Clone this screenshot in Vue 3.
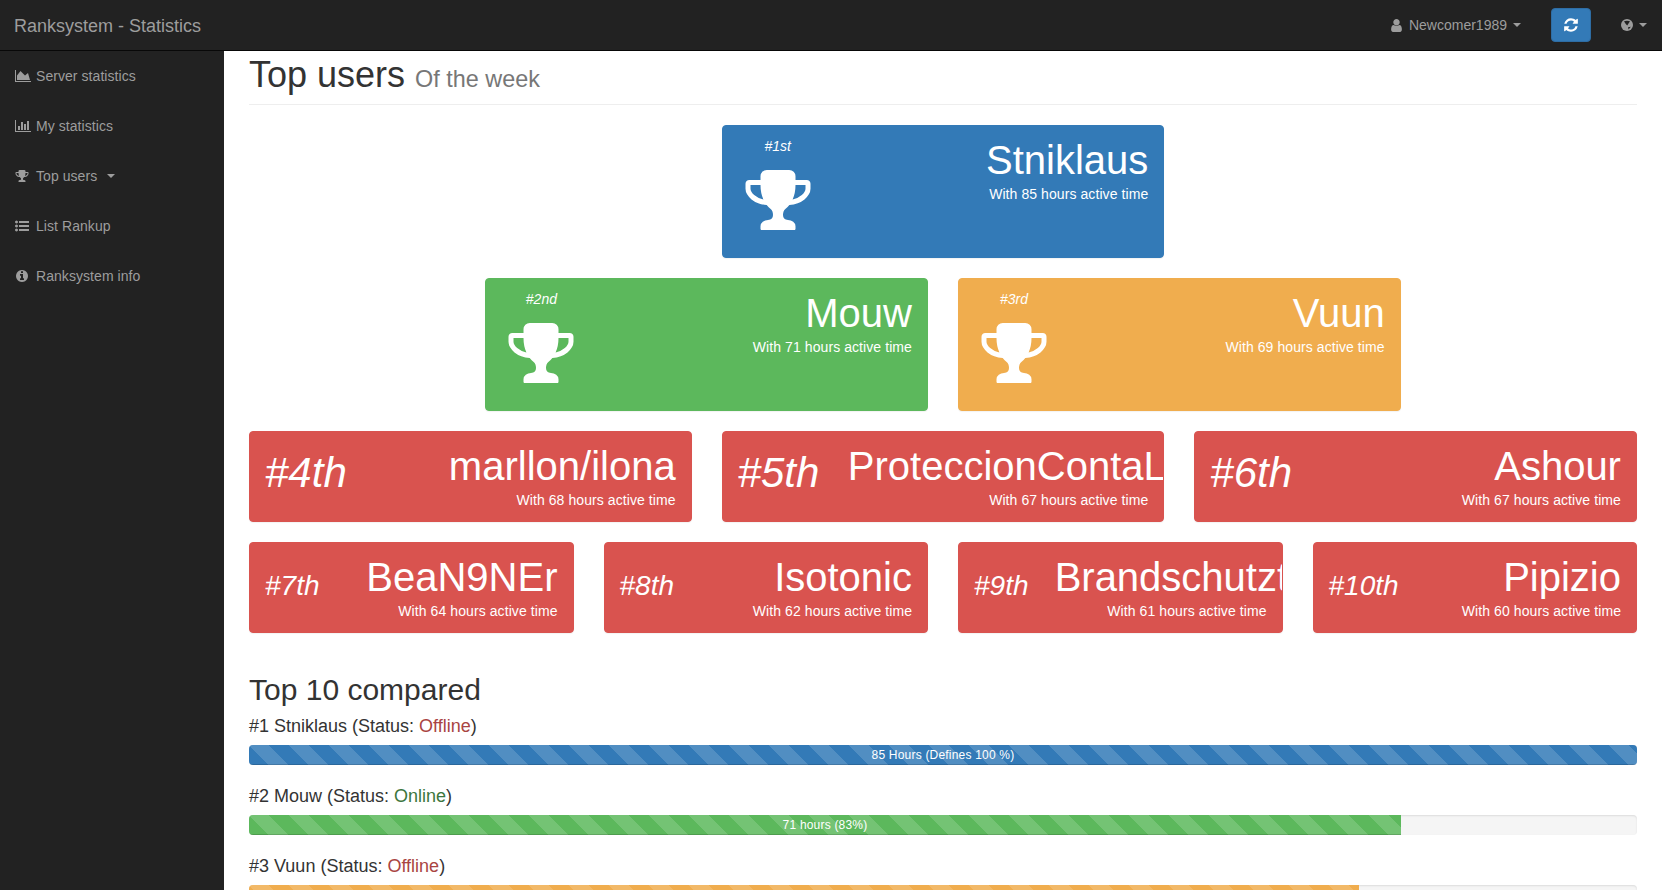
<script setup>
const icons = {
  area: 'M2048 1536v128h-2048v-1536h128v1408h1920zm-384-1024l256 896h-1664v-576l448-576 576 576z',
  bar: 'M640 896v512h-256v-512h256zm384-512v1024h-256v-1024h256zm1024 1152v128h-2048v-1536h128v1408h1920zm-640-896v768h-256v-768h256zm384-384v1152h-256v-1152h256z',
  trophy: 'M522 883q-74-162-74-371h-256v96q0 78 94.5 162t235.5 113zm1078-275v-96h-256q0 209-74 371 141-29 235.5-113t94.5-162zm128-128v128q0 71-41.5 143t-112 130-173 97.5-215.5 44.5q-42 54-95 95-38 34-52.5 72.5t-14.5 89.5q0 54 30.5 91t97.5 37q75 0 133.5 45.5t58.5 114.5v64q0 14-9 23t-23 9h-832q-14 0-23-9t-9-23v-64q0-69 58.5-114.5t133.5-45.5q67 0 97.5-37t30.5-91q0-51-14.5-89.5t-52.5-72.5q-53-41-95-95-113-5-215.5-44.5t-173-97.5-112-130-41.5-143v-128q0-40 28-68t68-28h288v-96q0-66 47-113t113-47h576q66 0 113 47t47 113v96h288q40 0 68 28t28 68z',
  list: 'M384 1408q0 80-56 136t-136 56-136-56-56-136 56-136 136-56 136 56 56 136zm0-512q0 80-56 136t-136 56-136-56-56-136 56-136 136-56 136 56 56 136zm1408 416v192q0 13-9.5 22.5t-22.5 9.5h-1216q-13 0-22.5-9.5t-9.5-22.5v-192q0-13 9.5-22.5t22.5-9.5h1216q13 0 22.5 9.5t9.5 22.5zm-1408-928q0 80-56 136t-136 56-136-56-56-136 56-136 136-56 136 56 56 136zm1408 416v192q0 13-9.5 22.5t-22.5 9.5h-1216q-13 0-22.5-9.5t-9.5-22.5v-192q0-13 9.5-22.5t22.5-9.5h1216q13 0 22.5 9.5t9.5 22.5zm0-512v192q0 13-9.5 22.5t-22.5 9.5h-1216q-13 0-22.5-9.5t-9.5-22.5v-192q0-13 9.5-22.5t22.5-9.5h1216q13 0 22.5 9.5t9.5 22.5z',
  info: 'M1152 1376v-160q0-14-9-23t-23-9h-96v-512q0-14-9-23t-23-9h-320q-14 0-23 9t-9 23v160q0 14 9 23t23 9h96v320h-96q-14 0-23 9t-9 23v160q0 14 9 23t23 9h448q14 0 23-9t9-23zm-128-896v-160q0-14-9-23t-23-9h-192q-14 0-23 9t-9 23v160q0 14 9 23t23 9h192q14 0 23-9t9-23zm640 416q0 209-103 385.5t-279.5 279.5-385.5 103-385.5-103-279.5-279.5-103-385.5 103-385.5 279.5-279.5 385.5-103 385.5 103 279.5 279.5 103 385.5z',
  user: 'M1536 1399q0 109-62.5 187t-150.5 78h-854q-88 0-150.5-78t-62.5-187q0-85 8.5-160.5t31.5-152 58.5-131 94-89 134.5-34.5q131 128 313 128t313-128q76 0 134.5 34.5t94 89 58.5 131 31.5 152 8.5 160.5zm-256-887q0 159-112.5 271.5t-271.5 112.5-271.5-112.5-112.5-271.5 112.5-271.5 271.5-112.5 271.5 112.5 112.5 271.5z',
  refresh: 'M1639 1056q0 5-1 7-64 268-268 434.5t-478 166.5q-146 0-282.5-55t-243.5-157l-129 129q-19 19-45 19t-45-19-19-45v-448q0-26 19-45t45-19h448q26 0 45 19t19 45-19 45l-137 137q71 66 161 102t187 36q134 0 250-65t186-179q11-17 53-117 8-23 30-23h192q13 0 22.5 9.5t9.5 22.5zm25-800v448q0 26-19 45t-45 19h-448q-26 0-45-19t-19-45 19-45l138-138q-148-137-349-137-134 0-250 65t-186 179q-11 17-53 117-8 23-30 23h-199q-13 0-22.5-9.5t-9.5-22.5v-7q65-268 270-434.5t480-166.5q146 0 284 55.5t245 156.5l130-129q19-19 45-19t45 19 19 45z'
}

const nav = [
  { label: 'Server statistics', icon: 'area', wide: true },
  { label: 'My statistics', icon: 'bar', wide: true },
  { label: 'Top users', icon: 'trophy', caret: true },
  { label: 'List Rankup', icon: 'list' },
  { label: 'Ranksystem info', icon: 'info' }
]

const first = [{ rank: '#1st', name: 'Stniklaus', hours: 85, color: 'blue', cls: 'col4 offset4' }]
const second = [
  { rank: '#2nd', name: 'Mouw', hours: 71, color: 'green', cls: 'col4 offset2' },
  { rank: '#3rd', name: 'Vuun', hours: 69, color: 'orange', cls: 'col4' }
]
const middle = [
  { rank: '#4th', name: 'marllon/ilona', hours: 68 },
  { rank: '#5th', name: 'ProteccionContaLegal', hours: 67 },
  { rank: '#6th', name: 'Ashour', hours: 67 }
]
const lower = [
  { rank: '#7th', name: 'BeaN9NEr', hours: 64 },
  { rank: '#8th', name: 'Isotonic', hours: 62 },
  { rank: '#9th', name: 'Brandschutztechnik', hours: 61 },
  { rank: '#10th', name: 'Pipizio', hours: 60 }
]
const bars = [
  { pos: '#1 Stniklaus', status: 'Offline', width: 100, color: 'blue', text: '85 Hours (Defines 100 %)' },
  { pos: '#2 Mouw', status: 'Online', width: 83, color: 'green', text: '71 hours (83%)' },
  { pos: '#3 Vuun', status: 'Offline', width: 80, color: 'orange', text: '69 hours (80%)' }
]
</script>

<template>
  <div class="shell">
    <header class="topbar">
      <a class="brand">Ranksystem - Statistics</a>
      <div class="top-right">
        <span class="user-menu">
          <svg class="ic" width="15" height="15" viewBox="0 0 1792 1792"><path :d="icons.user" /></svg>
          <span>Newcomer1989</span>
          <i class="caret"></i>
        </span>
        <button class="refresh">
          <svg width="16" height="16" viewBox="0 0 1792 1792"><path :d="icons.refresh" fill="#fff" /></svg>
        </button>
        <span class="lang-menu">
          <svg class="ic" width="14" height="14" viewBox="0 0 14 14">
            <circle cx="7" cy="7" r="6" />
            <path class="land" d="M4 3.2 Q7 2.4 10 3.2 L7.2 7.4 5.4 5.6ZM8 9.2 10.8 8.8 8.6 11.6Z" />
          </svg>
          <i class="caret"></i>
        </span>
      </div>
    </header>

    <div class="body">
      <aside class="sidebar">
        <a v-for="item in nav" :key="item.label" class="nav-item">
          <span class="nav-icon">
            <svg class="ic" :width="item.wide ? 16 : 14" height="14" :viewBox="item.wide ? '0 0 2048 1792' : '0 0 1792 1792'"><path :d="icons[item.icon]" /></svg>
          </span>
          <span>{{ item.label }}</span>
          <i v-if="item.caret" class="caret nav-caret"></i>
        </a>
      </aside>

      <main class="content">
        <h1 class="page-title">Top users <small>Of the week</small></h1>

        <div v-for="(row, i) in [first, second]" :key="i" class="row">
          <div v-for="p in row" :key="p.rank" :class="p.cls">
            <div class="panel" :class="p.color">
              <div class="side">
                <div class="rank-top">{{ p.rank }}</div>
                <svg class="trophy" width="70" height="70" viewBox="0 0 1792 1792"><path :d="icons.trophy" fill="#fff" /></svg>
              </div>
              <div class="main">
                <div class="name">{{ p.name }}</div>
                <div class="sub">With {{ p.hours }} hours active time</div>
              </div>
            </div>
          </div>
        </div>

        <div class="row">
          <div v-for="p in middle" :key="p.rank" class="col4">
            <div class="panel red flat">
              <div class="side"><div class="rank-big">{{ p.rank }}</div></div>
              <div class="main">
                <div class="name">{{ p.name }}</div>
                <div class="sub">With {{ p.hours }} hours active time</div>
              </div>
            </div>
          </div>
        </div>

        <div class="row">
          <div v-for="p in lower" :key="p.rank" class="col3">
            <div class="panel red flat">
              <div class="side"><div class="rank-mid">{{ p.rank }}</div></div>
              <div class="main">
                <div class="name">{{ p.name }}</div>
                <div class="sub">With {{ p.hours }} hours active time</div>
              </div>
            </div>
          </div>
        </div>

        <h2 class="compare-title">Top 10 compared</h2>

        <div v-for="b in bars" :key="b.pos" class="bar-block">
          <div class="bar-label">
            {{ b.pos }} (Status: <span :class="b.status === 'Online' ? 'online' : 'offline'">{{ b.status }}</span>)
          </div>
          <div class="progress">
            <div class="progress-bar" :class="b.color" :style="{ width: b.width + '%' }">{{ b.text }}</div>
          </div>
        </div>
      </main>
    </div>
  </div>
</template>

<style>
html, body { margin: 0; overflow: hidden; background: #fff; }
</style>

<style scoped>
* { box-sizing: border-box; }
.shell {
  height: 100vh;
  display: flex;
  flex-direction: column;
  overflow: hidden;
  font-family: "Liberation Sans", Arial, sans-serif;
  font-size: 14px;
  line-height: 20px;
  color: #333;
}
.topbar {
  flex: 0 0 51px;
  display: flex;
  align-items: center;
  justify-content: space-between;
  background: #222;
  border-bottom: 1px solid #080808;
}
.brand { padding: 2px 0 0 14px; font-size: 18px; color: #9d9d9d; }
.top-right { display: flex; align-items: center; padding-right: 15px; color: #9d9d9d; }
.ic { fill: #9d9d9d; display: block; }
.land { fill: #222; }
.user-menu { display: flex; align-items: center; }
.user-menu span { margin-left: 5px; }
.caret {
  display: inline-block;
  width: 0;
  height: 0;
  border-top: 4px solid #9d9d9d;
  border-left: 4px solid transparent;
  border-right: 4px solid transparent;
}
.user-menu .caret { margin-left: 6px; }
.refresh {
  width: 40px;
  height: 34px;
  margin-left: 30px;
  padding: 0;
  display: flex;
  align-items: center;
  justify-content: center;
  background: #337ab7;
  border: 1px solid #2e6da4;
  border-radius: 4px;
}
.lang-menu { display: flex; align-items: center; margin-left: 29px; }
.lang-menu .caret { margin-left: 5px; }

.body { flex: 1; display: flex; min-height: 0; }
.sidebar { flex: 0 0 224px; background: #222; }
.nav-item {
  display: flex;
  align-items: center;
  height: 50px;
  padding-left: 14px;
  color: #9d9d9d;
  letter-spacing: .06px;
}
.nav-icon {
  flex: 0 0 22px;
  display: flex;
  justify-content: flex-start;
}
.nav-icon .ic { margin-left: 1px; }
.nav-caret { margin-left: 10px; }

.content { flex: 1; min-width: 0; padding: 0 25px; background: #fff; overflow: hidden; }
.page-title {
  margin: 4px 0 20px;
  padding-bottom: 4px;
  border-bottom: 1px solid #eee;
  font-size: 36px;
  font-weight: 500;
  line-height: 39.6px;
}
.page-title small { font-size: 65%; font-weight: 400; color: #777; }

.row { display: flex; margin: 0 -15px 20px; }
.col3, .col4 { padding: 0 15px; min-width: 0; }
.col3 { flex: 0 0 25%; }
.col4 { flex: 0 0 33.33333333%; }
.offset4 { margin-left: 33.33333333%; }
.offset2 { margin-left: 16.66666667%; }

.panel {
  display: flex;
  overflow: hidden;
  padding: 10px 0;
  border-radius: 4px;
  border: 1px solid transparent;
  box-shadow: 0 1px 1px rgba(0, 0, 0, .05);
  color: #fff;
}
.panel.blue { background: #337ab7; border-color: #337ab7; }
.panel.green { background: #5cb85c; border-color: #5cb85c; }
.panel.orange { background: #f0ad4e; border-color: #f0ad4e; }
.panel.red { background: #d9534f; border-color: #d9534f; }
.panel.flat { height: 91px; }

.side { flex: 0 0 25%; min-width: 0; padding: 0 15px; white-space: nowrap; }
.main { flex: 0 0 75%; min-width: 0; padding: 0 15px; text-align: right; white-space: nowrap; }
.name { font-size: 40px; line-height: 48px; }
.sub { letter-spacing: .08px; }
.rank-top { text-align: center; font-style: italic; }
.trophy { display: block; margin: 9px auto 12px; }
.rank-big { font-size: 42px; font-style: italic; line-height: 62px; }
.rank-mid { font-size: 28px; font-style: italic; line-height: 66px; }

.compare-title { margin: 40px 0 9px; font-size: 30px; font-weight: 500; line-height: 33px; }
.bar-label { margin-bottom: 8px; font-size: 18px; line-height: 22px; }
.offline { color: #a94442; }
.online { color: #3c763d; }
.bar-block { margin-bottom: 20px; }
.progress {
  height: 20px;
  overflow: hidden;
  background: #f5f5f5;
  border-radius: 4px;
  box-shadow: inset 0 1px 2px rgba(0, 0, 0, .1);
}
.progress-bar {
  height: 100%;
  font-size: 12px;
  line-height: 20px;
  letter-spacing: .2px;
  color: #fff;
  text-align: center;
  box-shadow: inset 0 -1px 0 rgba(0, 0, 0, .15);
  background-image: linear-gradient(45deg, rgba(255,255,255,.15) 25%, transparent 25%, transparent 50%, rgba(255,255,255,.15) 50%, rgba(255,255,255,.15) 75%, transparent 75%, transparent);
  background-size: 40px 40px;
}
.progress-bar.blue { background-color: #337ab7; }
.progress-bar.green { background-color: #5cb85c; }
.progress-bar.orange { background-color: #f0ad4e; }
</style>
